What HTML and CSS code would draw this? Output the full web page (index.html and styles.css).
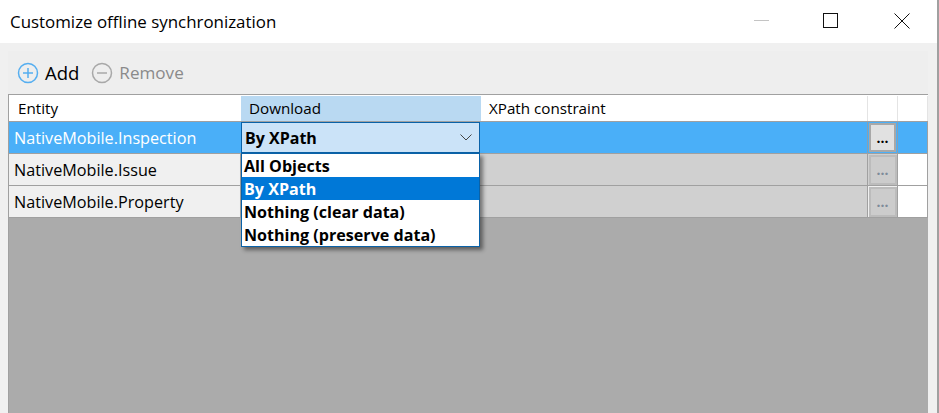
FILE: index.html
```html
<!DOCTYPE html>
<html lang="en">

<head>
    <meta charset="UTF-8">
    <meta name="viewport" content="width=device-width, initial-scale=1.0">
    <title>Customize offline synchronization</title>
    <link rel="stylesheet" href="styles.css">
</head>

<body>
    <div class="window">
        <div class="titlebar">
            <span class="title">Customize offline synchronization</span>
            <div class="window-buttons">
                <svg class="win-btn minimize" width="16" height="16" viewBox="0 0 16 16">
                    <path d="M0 7.5H15" stroke="#c4c4c4" fill="none"/>
                </svg>
                <svg class="win-btn" width="16" height="16" viewBox="0 0 16 16">
                    <rect x="0.5" y="0.5" width="14" height="14" stroke="#111" fill="none"/>
                </svg>
                <svg class="win-btn" width="16" height="16" viewBox="0 0 16 16">
                    <path d="M0.5 0.5L15.5 15.5M15.5 0.5L0.5 15.5" stroke="#111" fill="none"/>
                </svg>
            </div>
        </div>

        <div class="content">
            <div class="toolbar">
                <div class="tool">
                    <svg width="22" height="22" viewBox="0 0 22 22">
                        <circle cx="11" cy="11" r="9.5" stroke="#55aef0" stroke-width="1.5" fill="none"/>
                        <path d="M11 6V16M6 11H16" stroke="#55aef0" stroke-width="1.5" fill="none"/>
                    </svg>
                    <span class="add-label">Add</span>
                </div>
                <div class="tool disabled">
                    <svg width="22" height="22" viewBox="0 0 22 22">
                        <circle cx="11" cy="11" r="9.5" stroke="#a8a8a8" stroke-width="1.5" fill="none"/>
                        <path d="M6 11H16" stroke="#a8a8a8" stroke-width="1.5" fill="none"/>
                    </svg>
                    <span>Remove</span>
                </div>
            </div>

            <div class="grid">
                <div class="row header">
                    <div class="cell entity">Entity</div>
                    <div class="cell download">Download</div>
                    <div class="cell xpath">XPath constraint</div>
                    <div class="cell btn-cell"></div>
                    <div class="cell last"></div>
                </div>
                <div class="row selected">
                    <div class="cell entity">NativeMobile.Inspection</div>
                    <div class="cell download">
                        <div class="combo">
                            <span>By XPath</span>
                            <svg width="12" height="7" viewBox="0 0 12 7">
                                <path d="M0.5 0.5L6 6L11.5 0.5" stroke="#444" fill="none"/>
                            </svg>
                        </div>
                        <ul class="dropdown">
                            <li>All Objects</li>
                            <li class="active">By XPath</li>
                            <li>Nothing (clear data)</li>
                            <li>Nothing (preserve data)</li>
                        </ul>
                    </div>
                    <div class="cell xpath"></div>
                    <div class="cell btn-cell"><button class="dots">...</button></div>
                    <div class="cell last"></div>
                </div>
                <div class="row">
                    <div class="cell entity">NativeMobile.Issue</div>
                    <div class="cell download"></div>
                    <div class="cell xpath"></div>
                    <div class="cell btn-cell"><button class="dots" disabled>...</button></div>
                    <div class="cell last"></div>
                </div>
                <div class="row">
                    <div class="cell entity">NativeMobile.Property</div>
                    <div class="cell download"></div>
                    <div class="cell xpath"></div>
                    <div class="cell btn-cell outlined"><button class="dots" disabled>...</button></div>
                    <div class="cell last"></div>
                </div>
                <div class="empty"></div>
            </div>
        </div>
    </div>
</body>

</html>
```

FILE: styles.css
```css
html,
body {
    height: 100%;
    margin: 0;
    overflow: hidden;
}

body {
    background-color: #fff;
    font-family: "Open Sans", "Noto Sans", sans-serif;
    color: #000;
}

.window {
    display: flex;
    flex-direction: column;
    width: 939px;
    height: 413px;
    border-right: 2px solid #a0a0a0;
    box-sizing: border-box;
}

.titlebar {
    display: flex;
    justify-content: space-between;
    align-items: center;
    height: 43px;
    padding-left: 10px;
    background-color: #fff;
}

.title {
    font-size: 16.9px;
}

.window-buttons {
    display: flex;
    gap: 55px;
    padding-right: 27px;
    padding-bottom: 2px;
}

.win-btn {
    display: block;
}

.minimize {
    margin-right: -2px;
}

.content {
    flex: 1;
    display: flex;
    flex-direction: column;
    padding: 8px 9px 0 8px;
    background-color: #f0f0f0;
    min-height: 0;
}

.toolbar {
    display: flex;
    align-items: center;
    gap: 12px;
    height: 43px;
    padding-left: 9px;
    box-sizing: border-box;
    background-color: #eee;
    font-size: 17.1px;
}

.tool {
    display: flex;
    align-items: center;
    gap: 6px;
}

.tool.disabled {
    color: #8a8a8a;
}

.add-label {
    font-size: 18.5px;
}

.grid {
    flex: 1;
    display: flex;
    flex-direction: column;
    border-top: 1px solid #a0a0a0;
    border-left: 1px solid #a0a0a0;
    background-color: #ababab;
    font-size: 16.2px;
}

.row {
    display: grid;
    grid-template-columns: 232px 240px 387px 30px 30px;
    height: 32px;
    box-sizing: border-box;
    background-color: #d0d0d0;
    border-bottom: 1px solid #a0a0a0;
}

.row.header {
    height: 27px;
    background-color: #fff;
    font-size: 15.2px;
}

.cell {
    display: flex;
    align-items: center;
    box-sizing: border-box;
    min-width: 0;
}

.entity {
    padding-left: 5px;
    background-color: #f0f0f0;
    border-right: 1px solid #a0a0a0;
}

.xpath {
    border-right: 1px solid #a0a0a0;
}

.btn-cell {
    justify-content: center;
    border-right: 1px solid #a0a0a0;
}

.btn-cell.outlined {
    background-color: #f0f0f0;
}

.last {
    background-color: #fff;
    border-right: 1px solid #a0a0a0;
}

.header .cell {
    margin-top: 1px;
    padding-bottom: 2px;
}

.header .entity {
    padding-left: 9px;
    background-color: #fff;
    border-right: 0;
}

.header .download {
    padding-left: 8px;
    background-color: #b9d9f2;
}

.header .xpath {
    padding-left: 8px;
    border-right: 1px solid #e4e4e4;
}

.header .btn-cell,
.header .last {
    border-right: 1px solid #e4e4e4;
}

.selected {
    background-color: #4aaff8;
}

.selected .entity {
    color: #fff;
    background-color: #4aaff8;
    border-right: 0;
}

.selected .last {
    background-color: #4aaff8;
}

.selected .xpath,
.selected .btn-cell {
    border-right-color: #8b9fae;
}

.download {
    position: relative;
}

.combo {
    display: flex;
    justify-content: space-between;
    align-items: center;
    width: 239px;
    height: 31px;
    padding: 0 7px 0 3px;
    box-sizing: border-box;
    border: 1px solid #0a62a8;
    background-color: #cbe3f8;
    font-weight: 700;
    font-size: 16px;
}

.dropdown {
    position: absolute;
    top: 31px;
    left: 0;
    z-index: 2;
    width: 239px;
    margin: 0;
    padding: 0;
    list-style: none;
    box-sizing: border-box;
    border: 1px solid #0a62a8;
    background-color: #fff;
    box-shadow: 3px 3px 4px rgba(0, 0, 0, 0.45);
    font-weight: 700;
    font-size: 16.1px;
}

.dropdown li {
    height: 23px;
    line-height: 25px;
    padding-left: 2px;
}

.dropdown li.active {
    background-color: #0078d7;
    color: #fff;
}

.dots {
    width: 27px;
    height: 29px;
    padding: 0;
    border: 2px solid #a8a8a8;
    background-color: #e1e1e1;
    color: #000;
    font-family: inherit;
    font-size: 14px;
    font-weight: 700;
}

.dots:disabled {
    width: 28px;
    height: 30px;
    border-color: #bcbcbc;
    background-color: #cccccc;
    color: #7d8a99;
}

.empty {
    flex: 1;
}
```
